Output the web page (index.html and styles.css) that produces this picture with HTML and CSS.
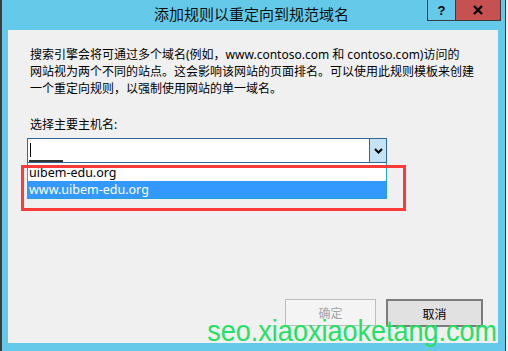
FILE: index.html
```html
<!DOCTYPE html>
<html lang="zh-CN">
<head>
  <meta charset="UTF-8"/>
  <title>添加规则以重定向到规范域名</title>
  <link rel="stylesheet" href="styles.css">
</head>
<body>
  <div class="window">
    <header class="titlebar">
      <span class="spacer"></span>
      <h1 class="title">添加规则以重定向到规范域名</h1>
      <div class="controls">
        <button class="ctl help">?</button>
        <button class="ctl close" aria-label="关闭">
          <svg width="10" height="10" viewBox="0 0 10 10"><path d="M1 1 L9 9 M9 1 L1 9" stroke="#000" stroke-width="2.4" fill="none"/></svg>
        </button>
      </div>
    </header>

    <main class="panel">
      <p class="desc">搜索引擎会将可通过多个域名(例如，www.contoso.com 和 contoso.com)访问的<br>网站视为两个不同的站点。这会影响该网站的页面排名。可以使用此规则模板来创建<br>一个重定向规则，以强制使用网站的单一域名。</p>

      <label class="field-label">选择主要主机名:</label>
      <div class="combo">
        <div class="combo-input">
          <span class="caret"></span>
          <span class="ime-line"></span>
        </div>
        <div class="combo-btn">
          <svg width="9" height="6" viewBox="0 0 9 6"><path d="M1 1 L4.5 4.5 L8 1" stroke="#000" stroke-width="2" fill="none"/></svg>
        </div>
      </div>
      <ul class="combo-list">
        <li>uibem-edu.org</li>
        <li class="selected">www.uibem-edu.org</li>
      </ul>
      <div class="highlight"></div>

      <div class="actions">
        <button class="btn" disabled>确定</button>
        <button class="btn primary">取消</button>
      </div>

      <div class="watermark">seo.xiaoxiaoketang.com</div>
    </main>
  </div>
</body>
</html>
```

FILE: styles.css
```css
:root {
  --frame: #65cae9;
  --panel: #f0f0f0;
  --edge:  #3b3b3b;
  --combo-border: #2d6a99;
}
* { box-sizing:border-box; }
html, body {
  margin:0; width:508px; height:351px; overflow:hidden;
  background:var(--panel);
}

/* ─── WINDOW FRAME ─────────────────── */
.window {
  width:506px; height:351px;
  background:var(--frame);
  border-left:2px solid var(--edge);
  border-right:1px solid var(--edge);
  display:flex; flex-direction:column;
}
.titlebar {
  height:30px; flex:none;
  display:grid; grid-template-columns:78px 1fr 78px;
  align-items:start;
}
.title {
  margin:0; font:400 15px/28px "Noto Sans CJK SC", sans-serif;
  text-align:center; color:#111;
  padding-right:4px;
}
.controls {
  display:flex; justify-content:flex-end; padding-right:4px;
}
.ctl {
  height:21px; padding:0; margin:0;
  border:1px solid var(--edge); border-top:0;
  display:flex; align-items:center; justify-content:center;
  font:700 13px "Liberation Sans", sans-serif; color:#000;
}
.help { width:28px; background:transparent; border-right:0; }
.close { width:46px; background:#c75050; }

/* ─── PANEL ───────────────────────── */
.panel {
  flex:1; position:relative;
  margin:0 7px 8px 6px;
  background:var(--panel);
  display:flex; flex-direction:column;
  padding:16px 15px 16px 19px;
  font:12px "Noto Sans", "Noto Sans CJK SC", sans-serif;
  color:#000;
}
.desc {
  margin:0; padding-left:3px;
  line-height:17px; white-space:nowrap;
}
.field-label {
  margin-top:19px; padding-left:3px;
  line-height:17px;
}

/* ─── COMBOBOX ───────────────────── */
.combo {
  width:360px; height:25px; margin-top:5px;
  display:flex;
  border:1px solid var(--combo-border);
  background:#fff;
}
.combo-input {
  flex:1; display:flex; flex-direction:column;
  padding-left:2px;
}
.caret {
  width:1px; height:14px; margin-top:4px;
  background:#000;
}
.ime-line {
  width:34px; height:2px; margin:auto 0 0 -1px;
  background:#333;
}
.combo-btn {
  width:17px; background:#c4e3f5;
  border-left:1px solid var(--combo-border);
  display:flex; align-items:center; justify-content:center;
}
.combo-list {
  list-style:none; margin:0; padding:0;
  width:360px;
  border:1px solid #26a0da; border-top:0;
  background:#fff;
}
.combo-list li {
  height:17px; line-height:17px;
  padding-left:1px;
  font-size:12.5px;
}
.combo-list li:first-child { height:18px; padding-top:1px; }
.combo-list li.selected {
  background:#3399ff; color:#fff;
}
.highlight {
  position:absolute; left:13px; top:135px;
  width:385px; height:46px;
  border:3px solid #fb3a3a;
}

/* ─── BUTTONS ─────────────────────── */
.actions {
  margin-top:auto;
  display:flex; justify-content:flex-end; gap:10px;
}
.btn {
  height:28px; width:97px;
  font:12px "Noto Sans CJK SC", sans-serif;
  background:#e1e1e1; color:#000;
  border:2px solid #7c7c7c;
  padding:0;
}
.btn[disabled] {
  width:91px; height:27px;
  background:#f4f4f4; color:#a3a3a3;
  border:1px solid #bdbdbd;
}

/* watermark stamped over the dialog */
.watermark {
  position:absolute; right:1px; bottom:-4px;
  font:27px/1 "Liberation Sans", sans-serif;
  color:#25e065;
  white-space:nowrap;
  transform:scaleY(1.1); transform-origin:bottom right;
}
```
